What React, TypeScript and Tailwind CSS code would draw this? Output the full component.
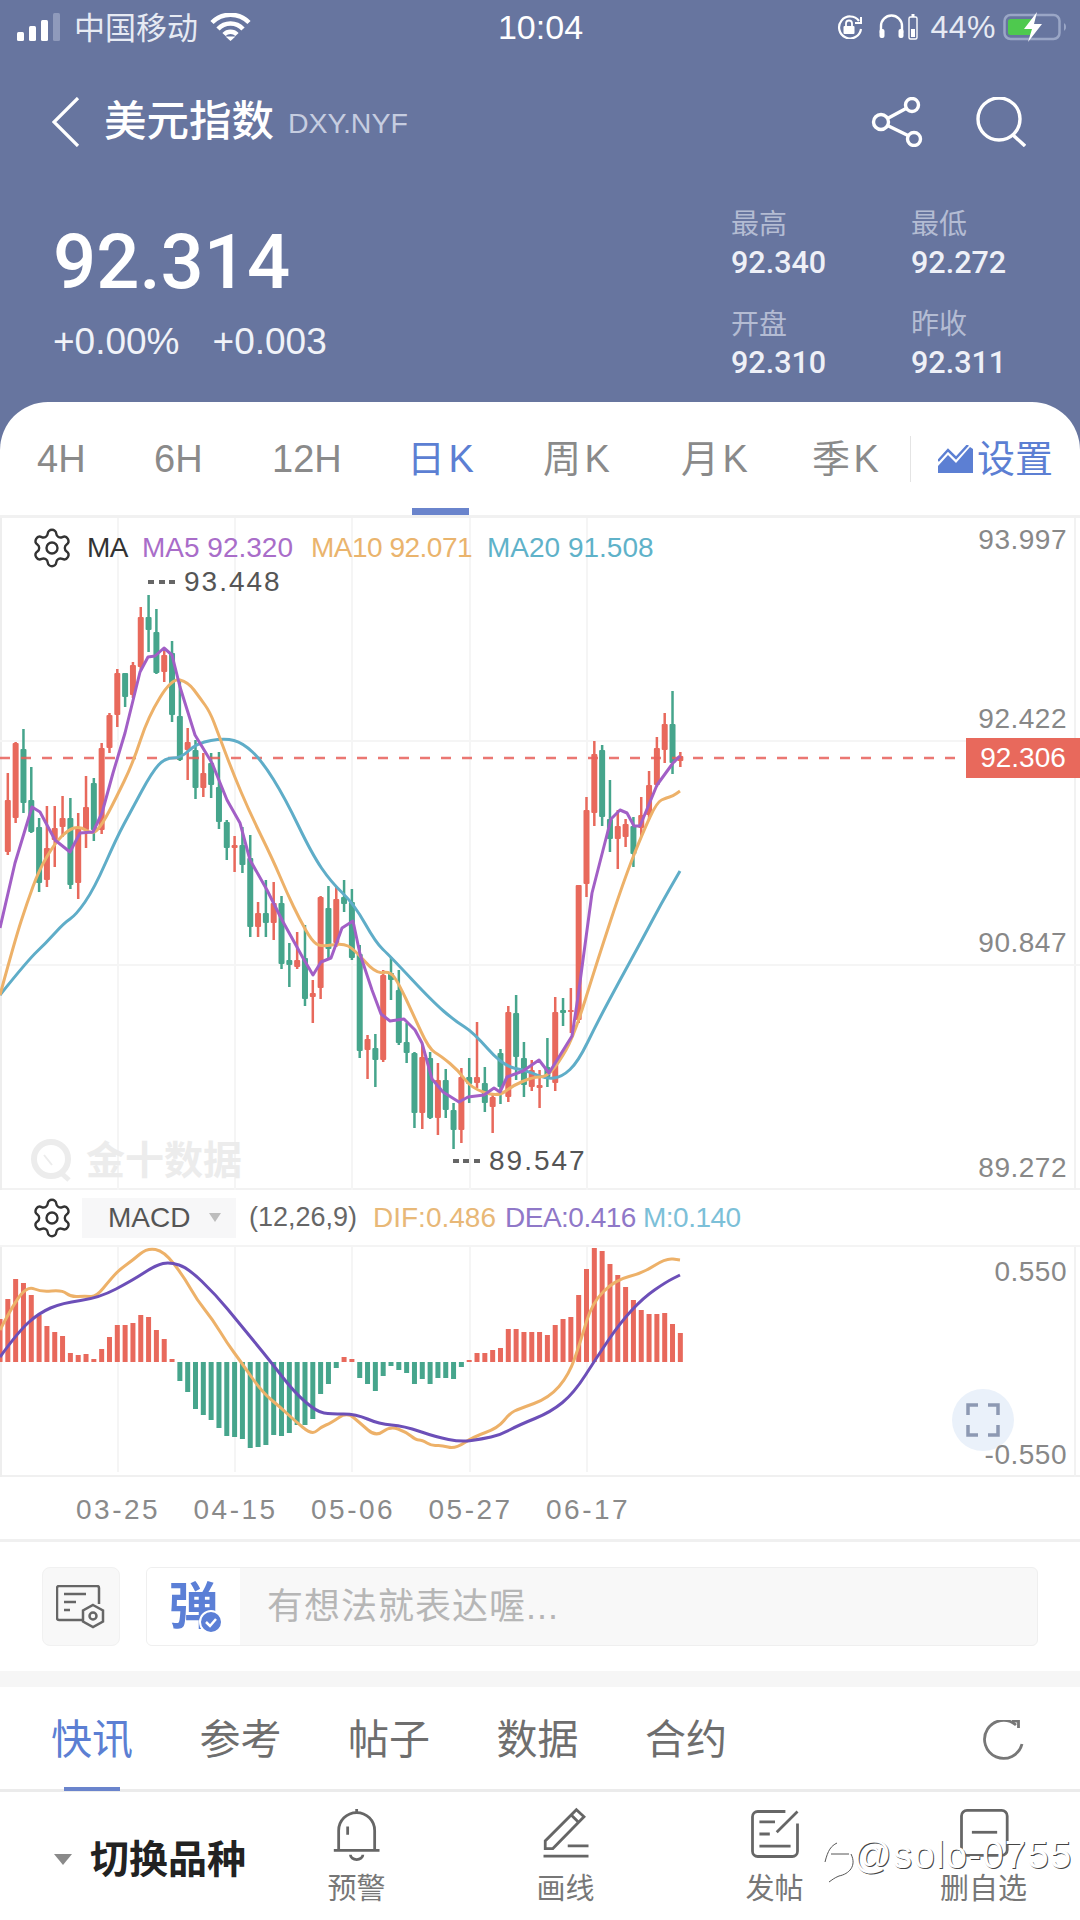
import { Settings } from 'lucide-react';

type Candle = ['r' | 'g', number, number, number, number];

// high, body top, body bottom, low (page px), one candle every 7.82px
const candles: Candle[] = [
    ['r', 773, 800, 852, 855], ['r', 742, 743, 818, 823], ['g', 729, 749, 803, 813], ['g', 767, 800, 832, 833],
    ['g', 818, 827, 883, 892], ['r', 806, 848, 880, 887], ['r', 806, 828, 840, 867], ['r', 796, 818, 827, 837],
    ['g', 798, 818, 885, 889], ['r', 813, 828, 883, 899], ['r', 776, 807, 830, 848], ['g', 778, 783, 830, 841],
    ['r', 743, 748, 830, 834], ['r', 713, 715, 748, 753], ['r', 669, 673, 715, 727], ['g', 673, 673, 697, 707],
    ['r', 662, 665, 695, 698], ['r', 607, 617, 667, 670], ['g', 595, 617, 630, 652], ['g', 609, 632, 673, 674],
    ['r', 650, 655, 672, 682], ['g', 641, 653, 715, 722], ['g', 680, 716, 760, 761], ['r', 728, 742, 750, 780],
    ['g', 740, 750, 788, 799], ['r', 753, 773, 788, 797], ['g', 753, 763, 785, 798], ['g', 752, 787, 822, 829],
    ['g', 820, 822, 848, 860], ['r', 836, 845, 848, 872], ['g', 827, 845, 865, 873], ['g', 835, 858, 927, 937],
    ['r', 902, 913, 927, 937], ['g', 880, 913, 923, 937], ['r', 882, 903, 923, 940], ['g', 896, 903, 964, 969],
    ['g', 943, 960, 965, 987], ['r', 932, 960, 967, 969], ['g', 925, 958, 999, 1006], ['r', 980, 993, 997, 1023],
    ['r', 896, 897, 988, 999], ['g', 886, 908, 949, 958], ['r', 886, 899, 943, 947], ['g', 880, 897, 904, 912],
    ['g', 889, 902, 958, 960], ['g', 945, 954, 1051, 1058], ['r', 1035, 1039, 1050, 1079], ['g', 1034, 1048, 1060, 1087],
    ['r', 970, 975, 1060, 1062], ['g', 957, 973, 980, 1000], ['g', 970, 990, 1043, 1045], ['g', 1023, 1042, 1053, 1063],
    ['g', 1052, 1053, 1113, 1128], ['r', 1045, 1057, 1113, 1129], ['g', 1052, 1058, 1118, 1119], ['r', 1063, 1080, 1118, 1135],
    ['g', 1069, 1080, 1110, 1118], ['g', 1103, 1110, 1130, 1149], ['r', 1068, 1077, 1130, 1143], ['g', 1058, 1077, 1084, 1103],
    ['r', 1022, 1077, 1083, 1088], ['g', 1067, 1083, 1103, 1112], ['r', 1095, 1097, 1107, 1133], ['g', 1049, 1053, 1087, 1104],
    ['r', 1006, 1012, 1097, 1102], ['g', 995, 1013, 1057, 1080], ['g', 1042, 1058, 1085, 1097], ['r', 1060, 1070, 1087, 1091],
    ['r', 1070, 1085, 1088, 1108], ['g', 1038, 1067, 1077, 1087], ['r', 997, 1012, 1083, 1091], ['g', 998, 1010, 1013, 1026],
    ['r', 988, 1010, 1012, 1033], ['r', 885, 885, 1020, 1023], ['r', 797, 810, 884, 897], ['r', 741, 754, 813, 826],
    ['g', 745, 750, 817, 826], ['g', 780, 819, 839, 852], ['r', 810, 826, 839, 869], ['r', 819, 824, 837, 847],
    ['g', 817, 826, 854, 867], ['r', 797, 815, 828, 837], ['r', 771, 785, 815, 819], ['r', 737, 748, 785, 787],
    ['r', 713, 724, 750, 763], ['g', 691, 724, 763, 774], ['r', 752, 756, 761, 767],
];

const ma5 = '0,928 15,863 32,807 40,812 55,840 70,852 80,833 93,832 102,813 113,773 125,733 140,672 148,657 155,656 164,648 172,655 180,687 195,735 212,763 227,800 240,823 250,860 267,890 282,920 303,958 313,975 321,962 331,958 342,928 353,921 360,954 372,990 381,1014 390,1021 404,1019 415,1030 422,1043 432,1079 443,1092 459,1102 468,1097 484,1095 494,1088 500,1092 507,1077 523,1071 539,1060 549,1073 572,1036 578,997 592,893 611,819 620,810 627,813 634,826 640,826 657,785 673,763 680,756';
const ma10 = '0,995 15,940 27,903 39,870 55,843 68,830 80,826 93,835 103,823 115,800 133,763 148,717 172,678 188,682 200,698 210,712 218,733 233,773 250,813 273,860 287,893 300,920 312,941 321,947 342,943 354,949 376,974 390,971 399,984 413,1014 429,1049 441,1056 459,1071 471,1088 498,1097 512,1086 533,1077 546,1077 558,1064 574,1036 597,962 624,880 643,832 657,802 666,798 673,796 680,791';
const ma20 = '0,995 28,960 46,943 64,923 76,915 94,889 117,837 131,811 152,772 165,758 181,758 197,743 225,738 243,743 262,761 285,798 312,854 331,882 354,904 376,943 390,956 432,1001 455,1021 473,1032 503,1066 528,1071 546,1079 562,1077 578,1062 597,1023 620,980 643,938 661,904 680,871';

// signed bar heights from the zero line
const macdBars = [
    43, 63, 83, 79, 67, 47, 36, 30, 26, 9, 7, 8, 3, 13, 25, 37, 37, 39, 47, 45, 32, 23, 3,
    -19, -30, -47, -53, -58, -66, -74, -75, -77, -86, -85, -83, -73, -74, -71, -63, -63, -57, -32, -22, -6,
    5, 3, -16, -22, -29, -14, -4, -8, -11, -22, -17, -22, -16, -16, -17, -5,
    2, 9, 9, 12, 14, 33, 33, 30, 30, 30, 27, 37, 43, 45, 67, 93, 114, 111, 98, 87, 75, 62, 52, 48, 48, 49, 38, 29,
];

const dif = '0,1330 14,1303 28,1286 41,1292 62,1290 71,1297 85,1296 96,1297 110,1280 119,1270 133,1260 147,1248 164,1251 184,1277 197,1300 213,1320 227,1343 241,1362 262,1392 280,1407 294,1420 312,1435 321,1427 331,1423 347,1412 360,1423 376,1437 390,1426 406,1432 416,1440 422,1440 432,1446 441,1445 455,1449 473,1437 498,1428 510,1413 519,1409 549,1398 569,1375 581,1340 592,1303 615,1280 643,1273 666,1258 680,1260';
const dea = '0,1357 18,1332 39,1313 62,1303 99,1298 133,1280 156,1265 170,1262 188,1268 216,1295 239,1323 271,1362 294,1392 317,1412 331,1414 356,1414 379,1424 404,1426 436,1437 461,1442 482,1439 500,1435 519,1425 551,1412 574,1393 597,1357 620,1323 643,1298 666,1282 680,1275';

// round the corners of a point list: curve through the midpoints
function smooth(points: string) {
    const pts = points.split(' ').map(p => p.split(',').map(Number));
    let d = `M${pts[0][0]} ${pts[0][1]}`;
    for (let i = 1; i < pts.length - 1; i++) {
        const mx = (pts[i][0] + pts[i + 1][0]) / 2;
        const my = (pts[i][1] + pts[i + 1][1]) / 2;
        d += ` Q${pts[i][0]} ${pts[i][1]} ${mx} ${my}`;
    }
    const last = pts[pts.length - 1];
    return `${d} L${last[0]} ${last[1]}`;
}

const tabs = [
    { label: '4H', w: 'w-[117px]' },
    { label: '6H', w: 'w-[118px]' },
    { label: '12H', w: 'w-[135px]' },
    { label: '日 K', w: 'w-[136px]', active: true },
    { label: '周 K', w: 'w-[138px]' },
    { label: '月 K', w: 'w-[131px]' },
    { label: '季 K', w: 'w-[98px]' },
];

const newsTabs = ['快讯', '参考', '帖子', '数据', '合约'];
const dates = ['03-25', '04-15', '05-06', '05-27', '06-17'];
const gridX = [118, 235, 352, 470, 587];

function StatusBar() {
    return (
        <div className="grid grid-cols-[1fr_auto_1fr] items-center h-[54px] pl-[17px] pr-[13px] text-[#e6eaf3]">
            <div className="flex items-center">
                <svg width="46" height="28" viewBox="0 0 46 28">
                    <rect x="0" y="19" width="7" height="9" rx="1.5" fill="#fff" />
                    <rect x="12" y="13" width="7" height="15" rx="1.5" fill="#fff" />
                    <rect x="24" y="7" width="7" height="21" rx="1.5" fill="#fff" />
                    <rect x="36" y="0" width="7" height="28" rx="1.5" fill="#8f9abb" />
                </svg>
                <span className="ml-[11px] mt-[2px] text-[31px] leading-none">中国移动</span>
                <svg className="ml-[12px]" width="41" height="28" viewBox="0 0 41 28" fill="none" stroke="#fff" strokeWidth="4.5">
                    <path d="M2 9.5a26 26 0 0 1 37 0" />
                    <path d="M8 16a17 17 0 0 1 25 0" />
                    <path d="M14 21.5a9 9 0 0 1 13 0" />
                    <path d="M20.5 28l-5-4.5h10z" fill="#fff" stroke="none" />
                </svg>
            </div>
            <span className="-ml-[3px] text-[34px] leading-none text-white">10:04</span>
            <div className="flex items-center justify-end">
                <svg width="28" height="24" viewBox="0 0 28 24" fill="none" stroke="#fff" strokeWidth="2.2">
                    <path d="M24 6A11 11 0 1 0 26 14" />
                    <path d="M26 2v6h-6" strokeWidth="2" />
                    <rect x="8.5" y="11" width="11" height="8" rx="1" fill="#fff" stroke="none" />
                    <path d="M11 11V8.5a3 3 0 0 1 6 0V11" strokeWidth="1.8" />
                </svg>
                <svg className="ml-[16px]" width="39" height="26" viewBox="0 0 39 26" fill="none" stroke="#fff">
                    <path d="M2 19V12a10.500 10.500 0 0 1 21 0v7" strokeWidth="2.4" />
                    <rect x="0.500" y="15" width="5" height="9" rx="2" fill="#fff" stroke="none" />
                    <rect x="19.500" y="15" width="5" height="9" rx="2" fill="#fff" stroke="none" />
                    <rect x="30" y="3" width="8" height="22" rx="1.500" strokeWidth="1.4" />
                    <rect x="32" y="15" width="4" height="8" fill="#fff" stroke="none" />
                    <rect x="32.500" y="0" width="3" height="3" fill="#fff" stroke="none" />
                </svg>
                <span className="ml-[12px] text-[32px] leading-none tracking-[0.5px]">44%</span>
                <svg className="ml-[7px]" width="64" height="30" viewBox="0 0 64 30" fill="none">
                    <rect x="1.500" y="3" width="55" height="24" rx="6" stroke="#9aa6c6" strokeWidth="2.500" />
                    <rect x="5" y="7" width="26" height="16" rx="2.500" fill="#4ec94e" />
                    <path d="M61 11v8a4 4 0 0 0 2-4 4 4 0 0 0-2-4z" fill="#9aa6c6" />
                    <path d="M34 0L21 17h8l-4 13 14-18h-8z" fill="#fff" />
                </svg>
            </div>
        </div>
    );
}

function Header() {
    return (
        <div className="h-[402px]">
            <StatusBar />
            <div className="flex items-center h-[50px] mt-[43px] pl-[52px] pr-[54px] text-white">
                <svg width="28" height="50" viewBox="0 0 28 50" fill="none" stroke="#fff" strokeWidth="3.2">
                    <path d="M26 1L2 25l24 24" />
                </svg>
                <span className="ml-[24px] text-[42.500px] leading-none font-medium">美元指数</span>
                <span className="ml-[14px] mt-[2px] text-[28.500px] leading-none text-[#c6cde0]">DXY.NYF</span>
                <svg className="ml-auto" width="52" height="50" viewBox="0 0 52 50" fill="none" stroke="#fff" strokeWidth="3.4">
                    <circle cx="41" cy="8" r="6.500" />
                    <circle cx="10" cy="25" r="7.500" />
                    <circle cx="43" cy="42" r="6.500" />
                    <path d="M16.500 21.500L35 11.500M16.500 28.500L37 38.500" />
                </svg>
                <svg className="ml-[53px]" width="50" height="50" viewBox="0 0 50 50" fill="none" stroke="#fff" strokeWidth="3.4">
                    <circle cx="23" cy="22" r="21" />
                    <path d="M37 38L49 49" />
                </svg>
            </div>
            <div className="flex justify-between pl-[53px]">
                <div className="pt-[77px]">
                    <div className="text-[76px] leading-[76px] font-medium text-white [font-family:Roboto,sans-serif]">92.314</div>
                    <div className="flex gap-[33px] mt-[22px] text-[37px] leading-[40px] text-[#f0f2f8]">
                        <span>+0.00%</span>
                        <span>+0.003</span>
                    </div>
                </div>
                <div className="grid grid-cols-[180px_169px] gap-y-[20px] pt-[56px]">
                    {[['最高', '92.340'], ['最低', '92.272'], ['开盘', '92.310'], ['昨收', '92.311']].map(([label, value]) => (
                        <div key={label}>
                            <div className="h-[40px] pt-[2px] text-[28px] leading-[40px] text-[#b4bcd3]">{label}</div>
                            <div className="h-[40px] text-[30.500px] leading-[40px] font-medium text-[#eef0f7] [font-family:Roboto,sans-serif]">{value}</div>
                        </div>
                    ))}
                </div>
            </div>
        </div>
    );
}

function PeriodTabs() {
    return (
        <div className="flex items-stretch h-[116px] pl-[37px] border-b-[3px] border-[#f1f1f1] text-[38px] text-[#8a8a8a]">
            {tabs.map(tab => (
                <div key={tab.label} className={`relative flex items-center ${tab.w} ${tab.active ? 'text-[#5c7fd3]' : ''}`}>
                    <span className="mt-[2px] [word-spacing:-7px]">{tab.label}</span>
                    {tab.active && <span className="absolute left-[5px] bottom-0 w-[57px] h-[7px] bg-[#6a84cc]" />}
                </div>
            ))}
            <div className="w-[1px] h-[46px] self-center bg-[#e4e4e4]" />
            <div className="flex items-center ml-[27px] text-[#5c7fd3]">
                <svg width="35" height="28" viewBox="0 0 35 28">
                    <path d="M0 28V21L10 10l8 8L32 2l3 2v24z" fill="#5c7fd3" />
                    <path d="M0 16L10 5l8 8L30 0" fill="none" stroke="#5c7fd3" strokeWidth="2.500" />
                </svg>
                <span className="ml-[4px] mt-[2px]">设置</span>
            </div>
        </div>
    );
}

function Gear() {
    return <Settings size={44} strokeWidth={1.300} className="text-[#333] ml-[30px] shrink-0" />;
}

function CandleChart() {
    return (
        <div className="relative h-[672px] border-b-[2px] border-[#f2f2f2]">
            <svg className="absolute inset-0" width="1080" height="672" viewBox="0 518 1080 672">
                {gridX.map(x => (
                    <line key={x} x1={x} x2={x} y1={518} y2={1190} stroke="#f5f5f5" strokeWidth="2" />
                ))}
                <line x1="1" x2="1" y1="518" y2="1190" stroke="#eeeeee" strokeWidth="2" />
                <line x1="1075" x2="1075" y1="518" y2="1190" stroke="#f2f2f2" strokeWidth="2" />
                <line x1="0" x2="1080" y1="741" y2="741" stroke="#f5f5f5" strokeWidth="2" />
                <line x1="0" x2="1080" y1="965" y2="965" stroke="#f5f5f5" strokeWidth="2" />
                {candles.map(([dir, high, top, bottom, low], i) => {
                    const x = (i + 1) * 7.82;
                    const color = dir === 'r' ? '#e8695c' : '#46a58c';
                    return (
                        <g key={i} fill={color}>
                            <rect x={x - 1.250} y={high} width="2.500" height={low - high} />
                            <rect x={x - 3} y={top} width="6" height={Math.max(bottom - top, 2)} rx="1" />
                        </g>
                    );
                })}
                <line x1="0" x2="966" y1="758" y2="758" stroke="#e8605a" strokeWidth="2.500" strokeDasharray="10 11" opacity="0.85" />
                <path d={smooth(ma20)} fill="none" stroke="#5fadc8" strokeWidth="3" />
                <path d={smooth(ma10)} fill="none" stroke="#edb169" strokeWidth="3" />
                <polyline points={ma5} fill="none" stroke="#a25fc6" strokeWidth="3" strokeLinejoin="round" />
            </svg>

            <div className="relative flex items-center h-[60px] text-[28px] leading-none">
                <Gear />
                <span className="ml-[13px] w-[55px] text-[#333] tracking-[-0.5px]">MA</span>
                <span className="w-[169px] text-[#a96dc9]">MA5 92.320</span>
                <span className="w-[176px] text-[#eab46d] tracking-[-0.5px]">MA10 92.071</span>
                <span className="text-[#5fb2c9]">MA20 91.508</span>
            </div>

            <div className="absolute left-[148px] top-[46px] flex items-center text-[28px] leading-[36px] tracking-[2px] text-[#555]">
                <span className="w-[27px] h-[4px] mr-[9px] [background:repeating-linear-gradient(90deg,#666_0_6px,transparent_6px_10.500px)]" />
                <span>93.448</span>
            </div>
            <div className="absolute left-[453px] top-[625px] flex items-center text-[28px] leading-[36px] tracking-[2px] text-[#555]">
                <span className="w-[27px] h-[4px] mr-[9px] [background:repeating-linear-gradient(90deg,#666_0_6px,transparent_6px_10.500px)]" />
                <span>89.547</span>
            </div>

            <div className="absolute left-[30px] top-[621px] flex items-center text-[39px] leading-[44px] font-bold text-[#ececec]">
                <svg width="46" height="44" viewBox="0 0 46 44" fill="none">
                    <circle cx="21" cy="20" r="17" stroke="#ececec" strokeWidth="6" />
                    <path d="M30 33l9 8" stroke="#ececec" strokeWidth="5" />
                    <path d="M14 16l8 10" stroke="#ececec" strokeWidth="2" />
                </svg>
                <span className="ml-[10px]">金十数据</span>
            </div>

            {[['93.997', 'top-[4px]'], ['92.422', 'top-[183px]'], ['90.847', 'top-[407px]'], ['89.272', 'top-[632px]']].map(([value, top]) => (
                <span key={value} className={`absolute right-[13px] ${top} text-[28px] leading-[36px] tracking-[0.500px] text-[#888]`}>{value}</span>
            ))}
            <span className="absolute right-0 top-[220px] w-[114px] h-[40px] flex items-center justify-center bg-[#e8695c] text-[28px] text-white">92.306</span>
        </div>
    );
}

function MacdChart() {
    return (
        <>
            <div className="flex items-center h-[57px] border-b-[2px] border-[#f4f4f4] text-[28px] leading-none">
                <Gear />
                <div className="flex items-center ml-[8px] w-[154px] h-[40px] bg-[#f7f7f8] pl-[26px] text-[#555]">
                    MACD
                    <span className="ml-[19px] w-0 h-0 border-x-[6px] border-x-transparent border-t-[9px] border-t-[#bdbdbd]" />
                </div>
                <span className="ml-[13px] w-[124px] text-[27px] text-[#666]">(12,26,9)</span>
                <span className="w-[132px] text-[#e8b877]">DIF:0.486</span>
                <span className="w-[138px] text-[#8f78c8] tracking-[-0.500px]">DEA:0.416</span>
                <span className="text-[#7cc0d8] tracking-[-0.500px]">M:0.140</span>
            </div>
            <div className="relative h-[230px] border-b-[2px] border-[#f0f0f0]">
                <svg className="absolute inset-0" width="1080" height="230" viewBox="0 1247 1080 230">
                    {gridX.map(x => (
                        <line key={x} x1={x} x2={x} y1={1247} y2={1472} stroke="#f5f5f5" strokeWidth="2" />
                    ))}
                    <line x1="1" x2="1" y1="1247" y2="1477" stroke="#eeeeee" strokeWidth="2" />
                    <line x1="1075" x2="1075" y1="1247" y2="1477" stroke="#f2f2f2" strokeWidth="2" />
                    {macdBars.map((h, i) => (
                        <rect
                            key={i}
                            x={i * 7.82 - 2.500}
                            y={h > 0 ? 1362 - h : 1362}
                            width="5"
                            height={Math.abs(h)}
                            fill={h > 0 ? '#e8695c' : '#46a58c'}
                        />
                    ))}
                    <path d={smooth(dif)} fill="none" stroke="#edb169" strokeWidth="3" />
                    <path d={smooth(dea)} fill="none" stroke="#6c4fb8" strokeWidth="3" />
                </svg>
                <span className="absolute right-[13px] top-[7px] text-[28px] leading-[36px] tracking-[0.500px] text-[#888]">0.550</span>
                <div className="absolute left-[952px] top-[142px] flex items-center justify-center w-[62px] h-[62px] rounded-full bg-[#eaf1fa]">
                    <svg width="34" height="34" viewBox="0 0 34 34" fill="none" stroke="#8d99b3" strokeWidth="3.500">
                        <path d="M2 12V2h10M22 2h10v10M32 22v10H22M12 32H2V22" />
                    </svg>
                </div>
                <span className="absolute right-[13px] top-[190px] text-[28px] leading-[36px] tracking-[0.500px] text-[#888]">-0.550</span>
            </div>
            <div className="h-[65px] border-b-[3px] border-[#f0f0f0] text-[28px] leading-[65px] tracking-[2.500px] text-[#8a8a8a]">
                <div className="flex pl-[76px]">
                    {dates.map(date => (
                        <span key={date} className="w-[117.500px]">{date}</span>
                    ))}
                </div>
            </div>
        </>
    );
}

function CommentBar() {
    return (
        <div className="flex h-[129px] pt-[25px] pl-[42px]">
            <div className="flex items-center justify-center w-[78px] h-[79px] rounded-[8px] bg-[#f8f8f8] border border-[#f1f1f1]">
                <svg width="50" height="44" viewBox="0 0 50 44" fill="none" stroke="#666" strokeWidth="2.500">
                    <path d="M28 35H3a2 2 0 0 1-2-2V3a2 2 0 0 1 2-2h38a2 2 0 0 1 2 2v16" />
                    <path d="M8 9h22M8 17h12M8 25h6" />
                    <path d="M37 20l10 5.500v11L37 42l-10-5.500v-11z" fill="#f8f8f8" />
                    <circle cx="37" cy="31" r="3.500" />
                </svg>
            </div>
            <div className="flex ml-[26px] w-[892px] h-[79px] rounded-[6px] border border-[#efefef] bg-[#f8f8f8] overflow-hidden">
                <div className="relative flex items-center justify-center w-[93px] h-full bg-white">
                    <span className="text-[50px] leading-none font-bold text-[#5b7fd6]">弹</span>
                    <svg className="absolute left-[52px] top-[42px]" width="24" height="24" viewBox="0 0 24 24">
                        <circle cx="12" cy="12" r="11" fill="#5b7fd6" stroke="#fff" strokeWidth="2" />
                        <path d="M7 12l4 4 6-7" fill="none" stroke="#fff" strokeWidth="2.500" />
                    </svg>
                </div>
                <span className="ml-[27px] self-center text-[36px] leading-none tracking-[1px] text-[#b6b6b6]">有想法就表达喔...</span>
            </div>
        </div>
    );
}

function NewsTabs() {
    return (
        <div className="flex items-stretch h-[105px] pl-[51px] pr-[55px] pt-[5px] border-b-[3px] border-[#ebebeb] text-[41px] leading-none text-[#6e6e6e]">
            {newsTabs.map((tab, i) => (
                <div key={tab} className={`relative flex items-center w-[148.500px] ${i === 0 ? 'text-[#5c7fd3]' : ''}`}>
                    {tab}
                    {i === 0 && <span className="absolute left-[13px] bottom-[-2px] w-[56px] h-[4px] bg-[#6a84cc]" />}
                </div>
            ))}
            <svg className="ml-auto self-center" width="42" height="42" viewBox="0 0 42 42" fill="none" stroke="#777" strokeWidth="2.800">
                <path d="M33 5A19 19 0 1 0 39 24" />
                <path d="M29 1h6.500v7" />
            </svg>
        </div>
    );
}

function BottomBar() {
    const items = [
        {
            label: '预警',
            icon: (
                <svg width="52" height="54" viewBox="40 40 150 156" fill="none" stroke="#666" strokeWidth="8">
                    <path d="M62 165V108a52 52 0 0 1 104 0v57" />
                    <path d="M114 56V46M48 165h132M96 178a18 14 0 0 0 36 0M88 96v24" />
                </svg>
            ),
        },
        {
            label: '画线',
            icon: (
                <svg width="52" height="54" viewBox="665 45 150 156" fill="none" stroke="#666" strokeWidth="8">
                    <path d="M680 165v-22l90-90 22 20-90 92z" />
                    <path d="M755 68l22 22M745 157h60M675 187h130" />
                </svg>
            ),
        },
        {
            label: '发帖',
            icon: (
                <svg width="52" height="54" viewBox="1290 42 150 156" fill="none" stroke="#666" strokeWidth="8">
                    <path d="M1395 55h-80a15 15 0 0 0-15 15v100a15 15 0 0 0 15 15h100a15 15 0 0 0 15-15V90" />
                    <path d="M1370 115l60-60M1320 85h45M1320 120h30M1320 155h90" />
                </svg>
            ),
        },
        {
            label: '删自选',
            icon: (
                <svg width="52" height="54" viewBox="415 60 150 156" fill="none" stroke="#666" strokeWidth="8">
                    <rect x="425" y="70" width="132" height="130" rx="16" />
                    <path d="M455 133h73" />
                </svg>
            ),
        },
    ];

    return (
        <div className="relative flex h-[127px]">
            <div className="flex items-center w-[252px] shrink-0 pl-[54px] pt-[8px]">
                <span className="w-0 h-0 border-x-[9px] border-x-transparent border-t-[11px] border-t-[#8a8a8a]" />
                <span className="ml-[18px] text-[39px] leading-none font-bold text-[#222]">切换品种</span>
            </div>
            {items.map(item => (
                <div key={item.label} className="flex flex-col items-center w-[209px] shrink-0 pt-[15px]">
                    {item.icon}
                    <span className="mt-[12px] text-[29px] leading-[32px] text-[#777]">{item.label}</span>
                </div>
            ))}
            <div className="absolute left-[823px] top-[48px] flex items-center text-white">
                <svg width="34" height="44" viewBox="0 0 34 44" fill="none" stroke="#555" strokeWidth="1">
                    <path d="M2 22C5 10 8 6 14 3" />
                    <path d="M8 14h18" />
                    <path d="M28 14c6 12-2 20-12 22-5 2-7 4-10 6" />
                </svg>
                <span className="-ml-[4px] -mt-[14px] text-[38px] leading-none tracking-[1.400px] [text-shadow:1px_1px_0_#444]">@solo-0755</span>
            </div>
        </div>
    );
}

export default function App() {
    return (
        <div className="w-[1080px] h-[1920px] overflow-hidden bg-[#67759f] [font-family:'Liberation_Sans','Noto_Sans_CJK_SC',sans-serif]">
            <Header />
            <div className="h-[1518px] rounded-t-[48px] bg-white">
                <PeriodTabs />
                <CandleChart />
                <MacdChart />
                <CommentBar />
                <div className="h-[16px] bg-[#f6f6f6]" />
                <NewsTabs />
                <BottomBar />
            </div>
        </div>
    );
}
